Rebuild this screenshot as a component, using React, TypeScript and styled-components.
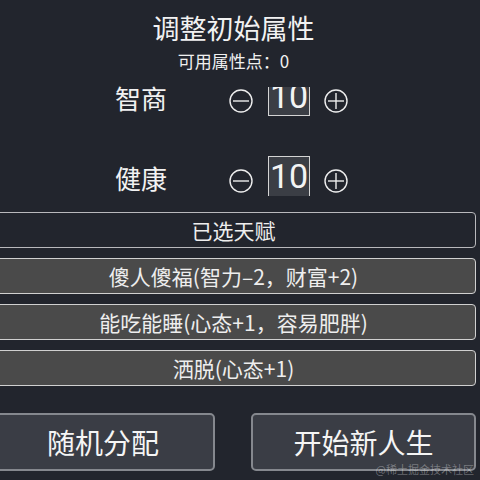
import styled, { createGlobalStyle } from "styled-components";

const GlobalStyle = createGlobalStyle`
  html, body {
    margin: 0;
    padding: 0;
    background: #22252d;
    overflow: hidden;
  }
  body {
    width: 480px;
    height: 480px;
    font-family: "Noto Sans CJK SC", "Noto Sans", sans-serif;
    color: #f0f0f0;
  }
`;

const Page = styled.main`
  width: 485px;
  margin-left: -9px;
  display: flex;
  flex-direction: column;
  align-items: center;
`;

const Title = styled.h1`
  margin: 14px 0 0;
  font-size: 27px;
  font-weight: 400;
  line-height: 1;
  color: #f2f2f2;
`;

const Points = styled.p`
  margin: 11px 0 0;
  font-size: 17px;
  line-height: 1;
  color: #f0f0f0;
`;

const StatRow = styled.div<{ $gap: number }>`
  align-self: stretch;
  height: 40px;
  margin-top: ${(p) => p.$gap}px;
  padding-left: 124px;
  display: flex;
  align-items: center;
`;

const StatLabel = styled.span`
  width: 114px;
  margin-bottom: 6px;
  font-size: 26px;
  line-height: 1;
  color: #f2f2f2;
`;

const StepButton = styled.button`
  width: 24px;
  height: 24px;
  padding: 0;
  border: none;
  background: none;
  display: flex;
  color: #eeeeee;
`;

const ValueBox = styled.div<{ $cut: "top" | "bottom" }>`
  width: 42px;
  margin: 0 14px 0 15px;
  box-sizing: border-box;
  border: 1.5px solid #d4d4d4;
  background: #3b3e45;
  overflow: hidden;
  display: flex;
  justify-content: center;
  font-family: Roboto, "Liberation Sans", sans-serif;
  font-size: 34px;
  line-height: 1;
  color: #f4f4f4;
  ${(p) =>
    p.$cut === "top"
      ? `height: 29px; border-top: none; align-items: flex-end; padding-bottom: 2px;`
      : `height: 40px; border-bottom: none; align-items: flex-start; padding-top: 2px; margin-bottom: 11px;`}
`;

const TalentList = styled.ul`
  align-self: stretch;
  margin: 11px 0 0;
  padding: 0;
  list-style: none;
  display: flex;
  flex-direction: column;
  gap: 10px;
`;

const Talent = styled.li<{ $header?: boolean }>`
  height: 36px;
  box-sizing: border-box;
  border: 1.5px solid ${(p) => (p.$header ? "#b9b9bc" : "#d0d0d0")};
  border-radius: 4px;
  background: ${(p) => (p.$header ? "#22252d" : "#4a4a4a")};
  display: flex;
  align-items: center;
  justify-content: center;
  font-size: 21px;
  color: #eeeeee;
`;

const Actions = styled.div`
  align-self: stretch;
  margin-top: 27px;
  display: grid;
  grid-template-columns: 224px 225px;
  justify-content: space-between;
`;

const ActionButton = styled.button`
  height: 58px;
  box-sizing: border-box;
  border: 2px solid #85888e;
  border-radius: 5px;
  background: #3a3d45;
  font-family: "Noto Sans CJK SC", "Noto Sans", sans-serif;
  font-size: 28px;
  color: #f5f5f5;
`;

const Watermark = styled.span`
  position: absolute;
  right: 6px;
  bottom: 3px;
  font-family: "Noto Sans CJK SC", sans-serif;
  font-size: 11px;
  color: rgba(255, 255, 255, 0.32);
`;

const CircleIcon = ({ plus }: { plus?: boolean }) => (
  <svg width="24" height="24" viewBox="0 0 24 24" fill="none" stroke="currentColor" strokeWidth="1.4">
    <circle cx="12" cy="12" r="11" />
    <line x1="4" y1="12" x2="20" y2="12" />
    {plus && <line x1="12" y1="4" x2="12" y2="20" />}
  </svg>
);

const talents = ["傻人傻福(智力–2，财富+2)", "能吃能睡(心态+1，容易肥胖)", "洒脱(心态+1)"];

export default function App() {
  return (
    <>
      <GlobalStyle />
      <Page>
        <Title>调整初始属性</Title>
        <Points>可用属性点：0</Points>
        <StatRow $gap={12}>
          <StatLabel>智商</StatLabel>
          <StepButton>
            <CircleIcon />
          </StepButton>
          <ValueBox $cut="top">10</ValueBox>
          <StepButton>
            <CircleIcon plus />
          </StepButton>
        </StatRow>
        <StatRow $gap={40}>
          <StatLabel>健康</StatLabel>
          <StepButton>
            <CircleIcon />
          </StepButton>
          <ValueBox $cut="bottom">10</ValueBox>
          <StepButton>
            <CircleIcon plus />
          </StepButton>
        </StatRow>
        <TalentList>
          <Talent $header>已选天赋</Talent>
          {talents.map((t) => (
            <Talent key={t}>{t}</Talent>
          ))}
        </TalentList>
        <Actions>
          <ActionButton>随机分配</ActionButton>
          <ActionButton>开始新人生</ActionButton>
        </Actions>
      </Page>
      <Watermark>@稀土掘金技术社区</Watermark>
    </>
  );
}
